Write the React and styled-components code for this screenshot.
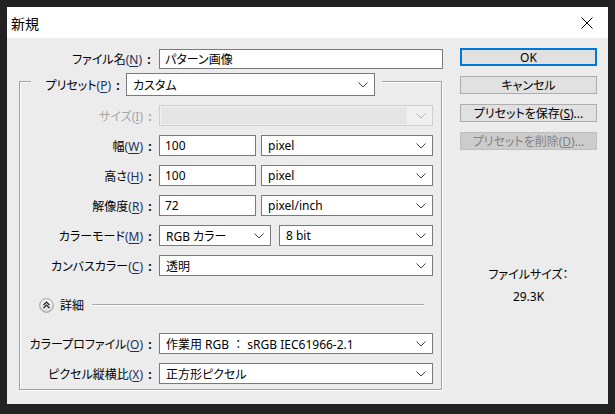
import React from "react";
import styled, { createGlobalStyle } from "styled-components";

const Global = createGlobalStyle`
  html, body { margin: 0; padding: 0; background: #222222; }
  body { font-family: "Noto Sans", "Noto Sans CJK JP", sans-serif; font-size: 12px; color: #000; }
  * { box-sizing: border-box; }
`;

const Dialog = styled.div`
  margin: 7px;
  width: 601px;
  height: 397px;
  background: #ececec;
  display: flex;
  flex-direction: column;
`;

const TitleBar = styled.div`
  height: 31px;
  background: #ffffff;
  display: flex;
  align-items: center;
  justify-content: space-between;
  padding: 0 15px 0 4px;
  font-family: "Noto Sans CJK JP", sans-serif;
  font-size: 14px;
  font-feature-settings: "palt";
`;

const Body = styled.div`
  flex: 1;
  display: grid;
  grid-template-columns: 424px 137px;
  column-gap: 17px;
  padding: 10px 11px 0 12px;
  align-items: start;
`;

const LeftCol = styled.div`
  display: flex;
  flex-direction: column;
`;

const RightCol = styled.div`
  display: flex;
  flex-direction: column;
  gap: 10px;
`;

const Label = styled.div`
  width: ${(p) => p.$w || 139}px;
  padding-right: ${(p) => p.$pr ?? 4}px;
  text-align: right;
  white-space: nowrap;
  font-feature-settings: "palt";
  color: ${(p) => (p.$disabled ? "#a6a6a6" : "#000")};
  flex: none;
`;

const Key = styled.span`
  color: ${(p) => (p.$disabled ? "#a6a6a6" : "#1c2f5a")};
  & u { text-underline-offset: 2px; }
`;

const Colon = styled.span`
  display: inline-block;
  width: 10px;
  text-align: center;
  margin-left: 2px;
  font-feature-settings: normal;
  font-weight: 700;
`;

const Row = styled.div`
  display: flex;
  align-items: center;
  height: 21px;
`;

const Input = styled.div`
  width: ${(p) => p.$w}px;
  height: ${(p) => p.$h || 21}px;
  border: 1px solid #7a7a7a;
  background: #fff;
  display: flex;
  align-items: center;
  padding-left: 5px;
  white-space: nowrap;
  font-feature-settings: "palt";
  flex: none;
`;

const Select = styled.div`
  width: ${(p) => p.$w}px;
  height: ${(p) => p.$h || 21}px;
  margin-left: ${(p) => p.$ml || 0}px;
  border: 1px solid ${(p) => (p.$disabled ? "#cfcfcf" : "#7a7a7a")};
  background: ${(p) => (p.$disabled ? "#f0f0f0" : "#fff")};
  display: flex;
  align-items: center;
  justify-content: space-between;
  padding: 0 6px 0 6px;
  white-space: nowrap;
  font-feature-settings: "palt";
  flex: none;
`;

const Plain = styled.span`
  font-feature-settings: normal;
`;

const DisabledFill = styled.div`
  align-self: stretch;
  margin: 1px 0 1px -5px;
  flex: 1;
  background: #e5e5e5;
  margin-right: 9px;
`;

const Chevron = ({ color = "#404040" }) => (
  <svg width="10" height="6" viewBox="0 0 10 6" style={{ flex: "none" }}>
    <polyline points="0.5,0.5 5,5 9.5,0.5" fill="none" stroke={color} strokeWidth="1" />
  </svg>
);

const GroupBox = styled.div`
  margin-top: 12px;
  width: 423px;
  border: 1px solid #a0a0a0;
  box-shadow: 1px 1px 0 #fff, inset 1px 1px 0 #fff;
  padding-bottom: 5px;
  display: flex;
  flex-direction: column;
`;

const Legend = styled.div`
  margin: -9px 0 0 11px;
  width: 351px;
  height: 23px;
  background: #ececec;
  display: flex;
  align-items: center;
`;

const Rows = styled.div`
  margin-top: ${(p) => p.$mt ?? 9}px;
  display: flex;
  flex-direction: column;
  gap: 9px;
`;

const Details = styled.div`
  margin: 21px 17px 20px 19px;
  height: 16px;
  display: flex;
  align-items: center;
  gap: 6px;
  font-feature-settings: "palt";
`;

const Rule = styled.div`
  flex: 1;
  height: 2px;
  border-top: 1px solid #a8a8a8;
  border-bottom: 1px solid #fff;
  margin-left: 2px;
`;

const Button = styled.div`
  height: 18px;
  display: flex;
  align-items: center;
  justify-content: center;
  background: ${(p) => (p.$disabled ? "#cccccc" : "#e1e1e1")};
  border: ${(p) => (p.$default ? "2px solid #0078d7" : p.$disabled ? "1px solid #bfbfbf" : "1px solid #adadad")};
  color: ${(p) => (p.$disabled ? "#838383" : "#000")};
  font-feature-settings: "palt";
  white-space: nowrap;
`;

const FileSize = styled.div`
  margin-top: 104px;
  display: flex;
  flex-direction: column;
  align-items: center;
  line-height: 22px;
  font-feature-settings: "palt";
`;

const Close = () => (
  <svg width="12" height="12" viewBox="0 0 12 12">
    <path d="M0.5 0.5 L11.5 11.5 M11.5 0.5 L0.5 11.5" stroke="#000" strokeWidth="1" />
  </svg>
);

const DetailsIcon = () => (
  <svg width="15" height="15" viewBox="0 0 15 15" style={{ flex: "none" }}>
    <defs>
      <linearGradient id="dg" x1="0" y1="0" x2="0" y2="1">
        <stop offset="0" stopColor="#ffffff" />
        <stop offset="1" stopColor="#d6d6d6" />
      </linearGradient>
    </defs>
    <circle cx="7.5" cy="7.5" r="6.8" fill="url(#dg)" stroke="#9a9a9a" strokeWidth="1" />
    <polyline points="4.5,7 7.5,4 10.5,7" fill="none" stroke="#222" strokeWidth="1.2" />
    <polyline points="4.5,10 7.5,7 10.5,10" fill="none" stroke="#222" strokeWidth="1.2" />
  </svg>
);

const Lbl = ({ text, k, disabled, ...rest }) => (
  <Label $disabled={disabled} {...rest}>
    {text}
    <Key $disabled={disabled}>
      (<u>{k}</u>)
    </Key>
    <Colon>:</Colon>
  </Label>
);

export default function App() {
  return (
    <>
      <Global />
      <Dialog>
        <TitleBar>
          <span>新規</span>
          <Close />
        </TitleBar>
        <Body>
          <LeftCol>
            <Row>
              <Lbl text="ファイル名" k="N" $w={140} $pr={5} />
              <Input $w={284} $h={20}>パターン画像</Input>
            </Row>
            <GroupBox>
              <Legend>
                <Lbl text="プリセット" k="P" $w={95} $pr={3} />
                <Select $w={249} $h={23}>
                  <span>カスタム</span>
                  <Chevron />
                </Select>
              </Legend>
              <Rows>
                <Row>
                  <Lbl text="サイズ" k="I" disabled />
                  <Select $w={274} $disabled>
                    <DisabledFill />
                    <Chevron color="#b0b0b0" />
                  </Select>
                </Row>
                <Row>
                  <Lbl text="幅" k="W" />
                  <Input $w={97}>100</Input>
                  <Select $w={172} $ml={5}>
                    <span>pixel</span>
                    <Chevron />
                  </Select>
                </Row>
                <Row>
                  <Lbl text="高さ" k="H" />
                  <Input $w={97}>100</Input>
                  <Select $w={172} $ml={5}>
                    <span>pixel</span>
                    <Chevron />
                  </Select>
                </Row>
                <Row>
                  <Lbl text="解像度" k="R" />
                  <Input $w={97}>72</Input>
                  <Select $w={172} $ml={5}>
                    <span>pixel/inch</span>
                    <Chevron />
                  </Select>
                </Row>
                <Row>
                  <Lbl text="カラーモード" k="M" />
                  <Select $w={112}>
                    <span>RGB カラー</span>
                    <Chevron />
                  </Select>
                  <Select $w={154} $ml={8}>
                    <span>8 bit</span>
                    <Chevron />
                  </Select>
                </Row>
                <Row>
                  <Lbl text="カンバスカラー" k="C" />
                  <Select $w={274}>
                    <span>透明</span>
                    <Chevron />
                  </Select>
                </Row>
              </Rows>
              <Details>
                <DetailsIcon />
                <span>詳細</span>
                <Rule />
              </Details>
              <Rows $mt={0}>
                <Row>
                  <Lbl text="カラープロファイル" k="O" />
                  <Select $w={274}>
                    <Plain>作業用 RGB ： sRGB IEC61966-2.1</Plain>
                    <Chevron />
                  </Select>
                </Row>
                <Row>
                  <Lbl text="ピクセル縦横比" k="X" />
                  <Select $w={274}>
                    <span>正方形ピクセル</span>
                    <Chevron />
                  </Select>
                </Row>
              </Rows>
            </GroupBox>
          </LeftCol>
          <RightCol>
            <Button $default>OK</Button>
            <Button>キャンセル</Button>
            <Button>
              プリセットを保存(<u>S</u>)...
            </Button>
            <Button $disabled>
              プリセットを削除(<u>D</u>)...
            </Button>
            <FileSize>
              <span>ファイルサイズ：</span>
              <span>29.3K</span>
            </FileSize>
          </RightCol>
        </Body>
      </Dialog>
    </>
  );
}
